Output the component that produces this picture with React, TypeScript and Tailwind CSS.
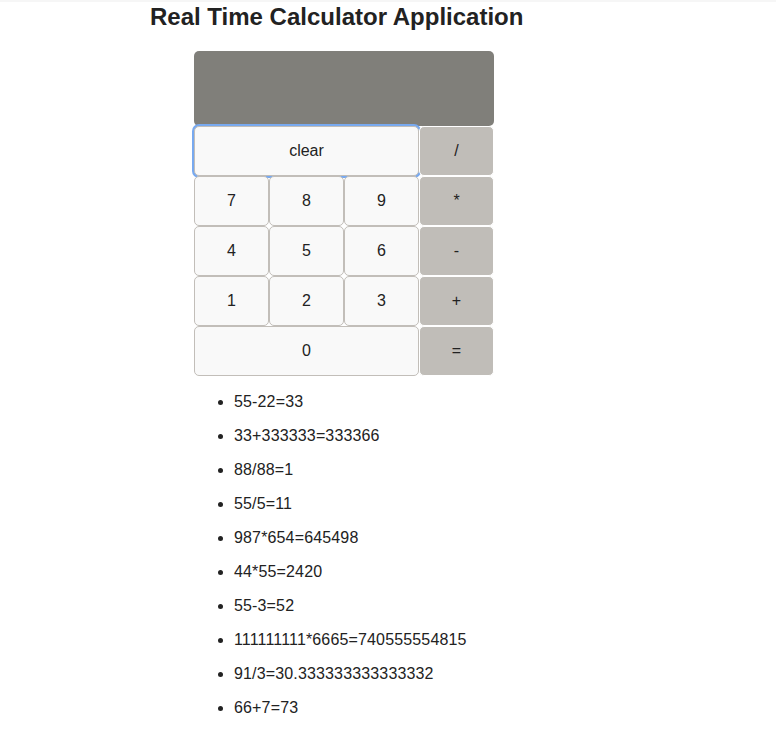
import React from "react";

const history = [
  "55-22=33",
  "33+333333=333366",
  "88/88=1",
  "55/5=11",
  "987*654=645498",
  "44*55=2420",
  "55-3=52",
  "111111111*6665=740555554815",
  "91/3=30.333333333333332",
  "66+7=73",
];

const num =
  "h-[50px] bg-[#f9f9f9] border border-[#c2beb9] rounded-[5px] text-[16px] text-[#222]";
const op =
  "h-[50px] bg-[#c0bdb8] border border-white rounded-[5px] text-[16px] text-[#222]";

export default function App() {
  return (
    <div
      className="min-h-[731px] bg-white text-[#222]"
      style={{ fontFamily: '"Liberation Sans", Arial, Helvetica, sans-serif' }}
    >
      <div className="h-[2px] bg-[#f6f6f6]" />
      <h1 className="ml-[150px] pt-[1px] text-[24px] leading-[28px] font-bold text-[#222]">
        Real Time Calculator Application
      </h1>
      <div className="ml-[194px] mt-[20px] w-[300px]">
        <div className="h-[75px] bg-[#807f7a] rounded-[5px]" />
        <div className="grid grid-cols-4">
          <button className={`${num} col-span-3 shadow-[0_0_0_2px_#78a9ef]`}>clear</button>
          <button className={op}>/</button>
          <button className={num}>7</button>
          <button className={num}>8</button>
          <button className={num}>9</button>
          <button className={op}>*</button>
          <button className={num}>4</button>
          <button className={num}>5</button>
          <button className={num}>6</button>
          <button className={op}>-</button>
          <button className={num}>1</button>
          <button className={num}>2</button>
          <button className={num}>3</button>
          <button className={op}>+</button>
          <button className={`${num} col-span-3`}>0</button>
          <button className={op}>=</button>
        </div>
        <ul className="list-disc pl-[40px] pt-[1px] text-[16px] leading-[18px] tracking-[0.15px] text-[#222]">
          {history.map((h) => (
            <li key={h} className="mt-[16px]">
              {h}
            </li>
          ))}
        </ul>
      </div>
    </div>
  );
}
